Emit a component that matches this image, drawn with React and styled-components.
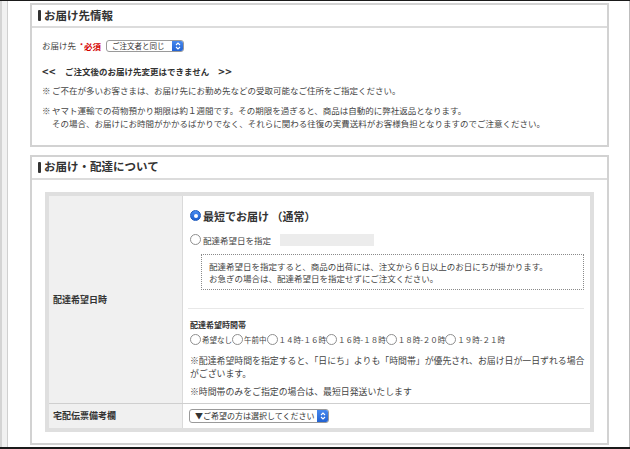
import React from "react";
import styled, { createGlobalStyle, css } from "styled-components";

const Global = createGlobalStyle`
  html, body { margin: 0; padding: 0; background: #fff; }
  body { font-family: "Noto Sans CJK JP", "Noto Sans", sans-serif; color: #333; }
  * { box-sizing: border-box; }
`;

const Frame = styled.div`
  width: 630px;
  height: 449px;
  display: flex;
  border-top: 1px solid #1a1a1a;
  border-bottom: 2px solid #1a1a1a;
  overflow: hidden;
  background: #fff;
`;

const SideLeft = styled.div`
  width: 8px;
  flex: none;
  background: #f1f1f1;
  border-left: 2px solid #d4d4d4;
  border-right: 1px solid #d0d0d0;
`;

const SideRight = styled.div`
  width: 10px;
  flex: none;
  background: #f4f4f4;
  border-left: 1px solid #bdbdbd;
`;

const Main = styled.main`
  flex: 1;
  padding: 2px 20px 0 22px;
  display: flex;
  flex-direction: column;
  gap: 8px;
`;

const Section = styled.section`
  border: 2px solid #d2d2d2;
  background: #fff;
`;

const SectionHead = styled.h2`
  margin: 0;
  height: 23px;
  display: flex;
  align-items: center;
  padding-left: 6px;
  border-bottom: 2px solid #dcdcdc;
  font-size: 11.5px;
  font-weight: 700;
  color: #333;
  line-height: 1;
  &::before {
    content: "";
    width: 3px;
    height: 11px;
    background: #333;
    border-radius: 1px;
    margin-right: 3px;
  }
`;

const InfoBody = styled.div`
  padding: 11px 10px 15px;
  font-size: 8.5px;
  line-height: 13px;
  color: #444;
`;

const DestRow = styled.div`
  display: flex;
  align-items: center;
  height: 13px;
`;

const Required = styled.span`
  color: #d40000;
  font-weight: 700;
  margin-left: 4px;
  margin-right: 5px;
  sup {
    font-size: 6px;
    vertical-align: 2px;
    margin-right: 1px;
  }
`;

const SelectBox = styled.div`
  display: flex;
  align-items: center;
  width: ${(p) => p.$width}px;
  height: ${(p) => p.$height}px;
  border: 1px solid #9a9a9a;
  border-radius: 3px;
  background: #fff;
  font-size: ${(p) => p.$font}px;
  color: #333;
  padding-left: 5px;
  overflow: hidden;
  white-space: nowrap;
`;

const SelectLabel = styled.span`
  flex: 1;
  line-height: 1;
`;

const SelectArrow = styled.span`
  flex: none;
  width: 12px;
  align-self: stretch;
  margin: -1px -1px -1px 0;
  background: linear-gradient(#4a8cf0, #1f5fd0);
  border-radius: 0 3px 3px 0;
  display: flex;
  align-items: center;
  justify-content: center;
`;

const Warning = styled.div`
  display: flex;
  align-items: center;
  margin-top: 13px;
  height: 12px;
  line-height: 12px;
  font-weight: 700;
  color: #333;
`;

const Arrows = styled.span`
  font-size: 11px;
  font-weight: 700;
  letter-spacing: 0.5px;
  margin: ${(p) => (p.$end ? "0 0 0 9px" : "0 9px 0 0")};
`;

const Note = styled.div`
  display: flex;
  margin-top: ${(p) => p.$gap}px;
  line-height: ${(p) => p.$lh}px;
  white-space: nowrap;
`;

const NoteMark = styled.span`
  flex: none;
  width: 10px;
`;

const DeliveryBody = styled.div`
  padding: 12px 13px 11px;
`;

const Table = styled.div`
  border: 4px solid #dfdfdf;
  background: #fff;
`;

const Row = styled.div`
  display: grid;
  grid-template-columns: 134px 1fr;
  ${(p) => p.$divided && css`border-top: 1px solid #cfcfcf;`}
`;

const LabelCell = styled.div`
  background: #f0f0f0;
  border-right: 1px solid #dadada;
  display: flex;
  align-items: center;
  padding-left: 4px;
  font-size: 9px;
  font-weight: 700;
  color: #333;
`;

const ValueCell = styled.div`
  padding: ${(p) => p.$pad};
  font-size: 8.5px;
  color: #444;
  min-height: ${(p) => p.$min || 0}px;
  display: flex;
  flex-direction: column;
  justify-content: ${(p) => (p.$center ? "center" : "flex-start")};
`;

const Radio = styled.span`
  display: inline-block;
  flex: none;
  position: relative;
  width: ${(p) => p.$size}px;
  height: ${(p) => p.$size}px;
  border-radius: 50%;
  border: 1px solid ${(p) => (p.$checked ? "#1b59bd" : "#8f8f8f")};
  background: ${(p) => (p.$checked ? "linear-gradient(#4a8cf0, #1e5fcf)" : "#fff")};
  ${(p) =>
    p.$checked &&
    css`
      &::after {
        content: "";
        position: absolute;
        left: 50%;
        top: 50%;
        width: 4px;
        height: 4px;
        margin: -2px 0 0 -2px;
        border-radius: 50%;
        background: #fff;
      }
    `}
`;

const BigOption = styled.div`
  display: flex;
  align-items: center;
  gap: 2px;
  line-height: 18px;
  font-size: 11px;
  font-weight: 700;
  color: #333;
`;

const DateOption = styled.div`
  display: flex;
  align-items: center;
  gap: 2px;
  margin-top: 8px;
  line-height: 14px;
`;

const DateInput = styled.span`
  width: 94px;
  height: 12px;
  background: #ececec;
  margin-left: 7px;
`;

const DottedNote = styled.div`
  margin: 7px 0 0 11px;
  border: 1px dotted #8a8a8a;
  padding: 5px 7px;
  line-height: 12px;
  white-space: nowrap;
`;

const Separator = styled.hr`
  margin: 18px 0 0 -2px;
  border: 0;
  height: 1px;
  background: #e8e8e8;
`;

const TimeTitle = styled.div`
  margin-top: 10px;
  line-height: 12px;
  font-size: 8px;
  font-weight: 700;
  color: #333;
`;

const TimeRow = styled.div`
  display: flex;
  align-items: center;
  margin-top: 2px;
  line-height: 14px;
  font-size: 7.5px;
  white-space: nowrap;
`;

const TimeText = styled.span`
  margin: 0 0 0 1px;
`;

const RowNote = styled.div`
  margin-top: ${(p) => p.$gap}px;
  line-height: 13px;
  font-size: 8.9px;
  white-space: nowrap;
`;

const Chevrons = () => (
  <svg width="6" height="8" viewBox="0 0 6 8">
    <path d="M1 3 L3 1 L5 3 M1 5 L3 7 L5 5" fill="none" stroke="#fff" strokeWidth="1.1" />
  </svg>
);

const times = ["希望なし", "午前中", "１４時-１６時", "１６時-１８時", "１８時-２０時", "１９時-２１時"];

export default function App() {
  return (
    <>
      <Global />
      <Frame>
        <SideLeft />
        <Main>
          <Section>
            <SectionHead>お届け先情報</SectionHead>
            <InfoBody>
              <DestRow>
                お届け先
                <Required>
                  <sup>*</sup>必須
                </Required>
                <SelectBox $width={78} $height={12} $font={7.5}>
                  <SelectLabel>ご注文者と同じ</SelectLabel>
                  <SelectArrow>
                    <Chevrons />
                  </SelectArrow>
                </SelectBox>
              </DestRow>
              <Warning>
                <Arrows>&lt;&lt;</Arrows>ご注文後のお届け先変更はできません<Arrows $end>&gt;&gt;</Arrows>
              </Warning>
              <Note $gap={7} $lh={12}>
                <NoteMark>※</NoteMark>
                <span>ご不在が多いお客さまは、お届け先にお勤め先などの受取可能なご住所をご指定ください。</span>
              </Note>
              <Note $gap={7.5} $lh={13}>
                <NoteMark>※</NoteMark>
                <span>
                  ヤマト運輸での荷物預かり期限は約１週間です。その期限を過ぎると、商品は自動的に弊社返品となります。
                  <br />
                  その場合、お届けにお時間がかかるばかりでなく、それらに関わる往復の実費送料がお客様負担となりますのでご注意ください。
                </span>
              </Note>
            </InfoBody>
          </Section>

          <Section>
            <SectionHead>お届け・配達について</SectionHead>
            <DeliveryBody>
              <Table>
                <Row>
                  <LabelCell>配達希望日時</LabelCell>
                  <ValueCell $pad="11px 6px 4.5px 7px">
                    <BigOption>
                      <Radio $size={11} $checked />
                      最短でお届け （通常）
                    </BigOption>
                    <DateOption>
                      <Radio $size={11} />
                      配達希望日を指定
                      <DateInput />
                    </DateOption>
                    <DottedNote>
                      配達希望日を指定すると、商品の出荷には、注文から 6 日以上のお日にちが掛かります。
                      <br />
                      お急ぎの場合は、配達希望日を指定せずにご注文ください。
                    </DottedNote>
                    <Separator />
                    <TimeTitle>配達希望時間帯</TimeTitle>
                    <TimeRow>
                      {times.map((t) => (
                        <React.Fragment key={t}>
                          <Radio $size={11} />
                          <TimeText>{t}</TimeText>
                        </React.Fragment>
                      ))}
                    </TimeRow>
                    <RowNote $gap={7.5}>
                      ※配達希望時間を指定すると、「日にち」よりも「時間帯」が優先され、お届け日が一日ずれる場合
                      <br />
                      がございます。
                    </RowNote>
                    <RowNote $gap={5}>※時間帯のみをご指定の場合は、最短日発送いたします</RowNote>
                  </ValueCell>
                </Row>
                <Row $divided>
                  <LabelCell>宅配伝票備考欄</LabelCell>
                  <ValueCell $pad="0 6px 0 6px" $min={24} $center>
                    <SelectBox $width={140} $height={14} $font={8}>
                      <SelectLabel>▼ご希望の方は選択してください</SelectLabel>
                      <SelectArrow>
                        <Chevrons />
                      </SelectArrow>
                    </SelectBox>
                  </ValueCell>
                </Row>
              </Table>
            </DeliveryBody>
          </Section>
        </Main>
        <SideRight />
      </Frame>
    </>
  );
}
